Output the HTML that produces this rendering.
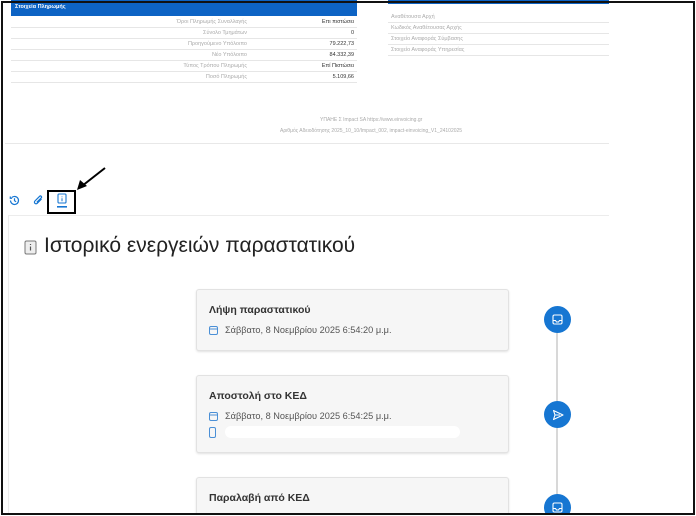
<!DOCTYPE html>
<html style="height:516px;overflow:hidden"><head><meta charset="utf-8"><style>
*{margin:0;padding:0;box-sizing:border-box}
body{width:696px;height:516px;background:#fff;position:relative;overflow:hidden;font-family:"Liberation Sans","DejaVu Sans",sans-serif}
.a{position:absolute}
.row{position:absolute;left:11px;width:346px;height:11px;border-bottom:1px solid #e6e6e6;font-size:5.5px;color:#aaa}
.row .l{position:absolute;right:110px;top:2px}
.row .r{position:absolute;right:3px;top:2px;color:#333}
.rrow{position:absolute;left:388px;width:221px;height:11px;border-bottom:1px solid #e6e6e6;font-size:5.5px;color:#aaa;padding:2px 0 0 3px}
.card{position:absolute;left:196px;width:313px;background:#f6f6f6;border:1px solid #e2e2e2;border-radius:3px;box-shadow:0 1px 2px rgba(0,0,0,.12)}
.card h3{position:absolute;left:12px;top:14px;font-size:10.5px;font-weight:bold;color:#333}
.card .d{position:absolute;left:12px;font-size:9.2px;color:#555}
.card .d svg{vertical-align:-2px;margin-right:7px}
.circ{position:absolute;left:544px;width:27px;height:27px;border-radius:50%;background:#1676d2;display:flex;align-items:center;justify-content:center}
</style></head><body>
<div class="a" style="left:11px;top:0;width:346px;height:16px;background:#0d63c4;color:#fff;font-size:5.5px;font-weight:bold;padding:4px 4px">Στοιχεία Πληρωμής</div>
<div class="a" style="left:388px;top:0;width:221px;height:4px;background:#0d63c4"></div>
<div class="row" style="top:17px"><span class="l">Όροι Πληρωμής Συναλλαγής</span><span class="r">Επι πιστώσει</span></div>
<div class="row" style="top:28px"><span class="l">Σύνολο Τμημάτων</span><span class="r">0</span></div>
<div class="row" style="top:39px"><span class="l">Προηγούμενο Υπόλοιπο</span><span class="r">79.222,73</span></div>
<div class="row" style="top:50px"><span class="l">Νέο Υπόλοιπο</span><span class="r">84.332,39</span></div>
<div class="row" style="top:61px"><span class="l">Τύπος Τρόπου Πληρωμής</span><span class="r">Επί Πιστώσει</span></div>
<div class="row" style="top:72px"><span class="l">Ποσό Πληρωμής</span><span class="r">5.109,66</span></div>
<div class="rrow" style="top:12px">Αναθέτουσα Αρχή</div>
<div class="rrow" style="top:23px">Κωδικός Αναθέτουσας Αρχής</div>
<div class="rrow" style="top:34px">Στοιχείο Αναφοράς Σύμβασης</div>
<div class="rrow" style="top:45px">Στοιχείο Αναφοράς Υπηρεσίας</div>
<div class="a" style="left:320px;top:117px;font-size:5px;color:#aaa">ΥΠΑΗΕ Σ Impact SA https://www.einvoicing.gr</div>
<div class="a" style="left:280px;top:128px;font-size:5px;color:#aaa">Αριθμός Αδειοδότησης 2025_10_10/Impact_002, impact-einvoicing_V1_24102025</div>
<div class="a" style="left:5px;top:143px;width:604px;height:1px;background:#e8e8e8"></div>

<svg class="a" style="left:8px;top:194px" width="13" height="13" viewBox="0 0 13 13"><path d="M2.5 6.5a4 4 0 1 0 1.2-2.9M2.3 2.5v1.8h1.8M6.5 4.3v2.4l1.6 1" fill="none" stroke="#1676d2" stroke-width="1.2"/></svg>
<svg class="a" style="left:32px;top:194px" width="13" height="13" viewBox="0 0 13 13"><path d="M9.5 5L5.2 9.3a1.6 1.6 0 0 1-2.3-2.3L7.6 2.3a1.1 1.1 0 0 1 1.6 1.6L4.8 8.3" fill="none" stroke="#1676d2" stroke-width="1.2"/></svg>
<svg class="a" style="left:56px;top:193px" width="12" height="16" viewBox="0 0 12 16"><rect x="2" y="1" width="8" height="9" rx="1" fill="none" stroke="#1676d2" stroke-width="1.1"/><path d="M6 3.5v.8M6 5.3v3" stroke="#1676d2" stroke-width="1"/><rect x="1" y="13" width="10" height="1.6" fill="#1676d2"/></svg>
<div class="a" style="left:47px;top:190px;width:29px;height:24px;border:2px solid #000"></div>
<svg class="a" style="left:70px;top:162px" width="40" height="32"><line x1="35" y1="6" x2="12" y2="24" stroke="#000" stroke-width="2"/><path d="M7 28l3-10 7 6z" fill="#000"/></svg>

<div class="a" style="left:8px;top:215px;width:601px;height:1px;background:#ececec"></div>
<div class="a" style="left:8px;top:216px;width:1px;height:300px;background:#ececec"></div>
<svg class="a" style="left:24px;top:240px" width="13" height="15" viewBox="0 0 13 15"><rect x="1" y="1" width="11" height="13" rx="1.5" fill="#eee" stroke="#777" stroke-width="1"/><path d="M6.5 4v1M6.5 6.5v4" stroke="#555" stroke-width="1.2"/></svg>
<div class="a" style="left:44px;top:234px;font-size:21px;color:#222;font-family:'Liberation Sans',sans-serif">Ιστορικό ενεργειών παραστατικού</div>

<div class="a" style="left:556px;top:320px;width:1.5px;height:196px;background:#d8d8d8"></div>

<div class="card" style="top:289px;height:62px"><h3>Λήψη παραστατικού</h3>
<div class="d" style="top:35px"><svg width="9" height="9"><rect x=".5" y=".5" width="8" height="8" rx="1.5" fill="none" stroke="#4a8fd6"/><line x1="0" y1="3" x2="9" y2="3" stroke="#4a8fd6"/></svg>Σάββατο, 8 Νοεμβρίου 2025 6:54:20 μ.μ.</div></div>
<div class="card" style="top:375px;height:78px"><h3>Αποστολή στο ΚΕΔ</h3>
<div class="d" style="top:35px"><svg width="9" height="9"><rect x=".5" y=".5" width="8" height="8" rx="1.5" fill="none" stroke="#4a8fd6"/><line x1="0" y1="3" x2="9" y2="3" stroke="#4a8fd6"/></svg>Σάββατο, 8 Νοεμβρίου 2025 6:54:25 μ.μ.</div>
<div class="d" style="top:51px"><svg width="7" height="11"><rect x=".5" y=".5" width="6" height="10" rx="1.5" fill="none" stroke="#4a8fd6"/></svg></div>
<div class="a" style="left:28px;top:50px;width:235px;height:12px;background:#fff;border-radius:6px"></div></div>
<div class="card" style="top:477px;height:38px"><h3>Παραλαβή από ΚΕΔ</h3></div>

<div class="circ" style="top:306px"><svg width="11" height="11" viewBox="0 0 11 11"><rect x="1" y="1" width="9" height="9" rx="1.5" fill="none" stroke="#fff" stroke-width="1.1"/><path d="M1 6.5h2.5l1 1.5h2l1-1.5H10" fill="none" stroke="#fff" stroke-width="1.1"/></svg></div>
<div class="circ" style="top:401px"><svg width="12" height="12" viewBox="0 0 12 12"><path d="M1.5 1.5L11 6 1.5 10.5 3 6zM3 6h5" fill="none" stroke="#fff" stroke-width="1.1" stroke-linejoin="round"/></svg></div>
<div class="circ" style="top:494px"><svg width="11" height="11" viewBox="0 0 11 11"><rect x="1" y="1" width="9" height="9" rx="1.5" fill="none" stroke="#fff" stroke-width="1.1"/><path d="M1 6.5h2.5l1 1.5h2l1-1.5H10" fill="none" stroke="#fff" stroke-width="1.1"/></svg></div>

<div class="a" style="left:0;top:514px;width:696px;height:2px;background:#fff"></div>
<div class="a" style="left:1px;top:1px;width:694px;height:514px;border:2px solid #111"></div>
</body></html>
